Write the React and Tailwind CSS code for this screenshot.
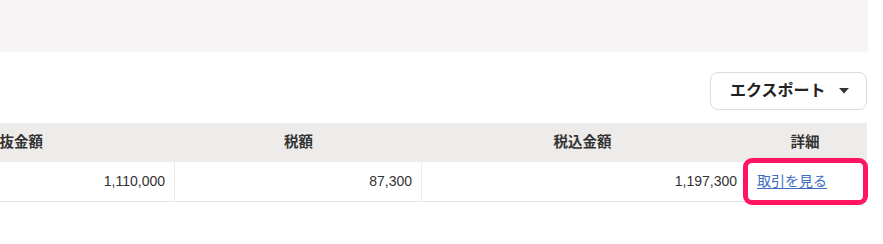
import React from "react";

const rows = [
  { excl: "1,110,000", tax: "87,300", incl: "1,197,300" },
];

const font = "font-['Liberation_Sans','Noto_Sans_CJK_JP',sans-serif]";

export default function App() {
  return (
    <div className={`w-[883px] h-[244px] bg-white overflow-hidden text-[#333] ${font}`}>
      <div className="h-[52px] w-[868px] bg-[#f6f4f5]" />

      <div className="w-[867px] flex justify-end pt-[20px]">
        <button className="w-[157px] h-[38px] flex items-center justify-between pl-[19px] pr-[17px] border border-[#dcdcdc] rounded-[8px] bg-white text-[16px] font-bold text-[#222]">
          <span>エクスポート</span>
          <svg width="10" height="6" viewBox="0 0 10 6">
            <path d="M0 0 L10 0 L5 5.5 Z" fill="#333" />
          </svg>
        </button>
      </div>

      <div className="w-[867px] mt-[13px]">
        <div className="ml-[-147px] w-[1014px]">
          <div className="grid grid-cols-[322px_247px_321px_124px] h-[39px] bg-[#eeeceb] text-[14.5px] font-bold items-center">
            <div className="text-center">税抜金額</div>
            <div className="text-center">税額</div>
            <div className="text-center">税込金額</div>
            <div className="text-center">詳細</div>
          </div>
          {rows.map((r, i) => (
            <div
              key={i}
              className="grid grid-cols-[322px_247px_321px_124px] h-[40px] border-b border-[#e6e6e6] text-[14px]"
            >
              <div className="flex items-center justify-end pr-[9px] border-r border-[#ebebeb]">{r.excl}</div>
              <div className="flex items-center justify-end pr-[9px] border-r border-[#ebebeb]">{r.tax}</div>
              <div className="flex items-center justify-end pr-[6px]">{r.incl}</div>
              <div className="relative flex items-center pl-[14px]">
                <a href="#" className="text-[#3b6cc0] underline underline-offset-2">取引を見る</a>
                <div className="absolute left-0 right-[-1px] top-[-4px] bottom-[-4px] border-[5px] border-[#ff1560] rounded-[9px] pointer-events-none" />
              </div>
            </div>
          ))}
        </div>
      </div>
    </div>
  );
}
